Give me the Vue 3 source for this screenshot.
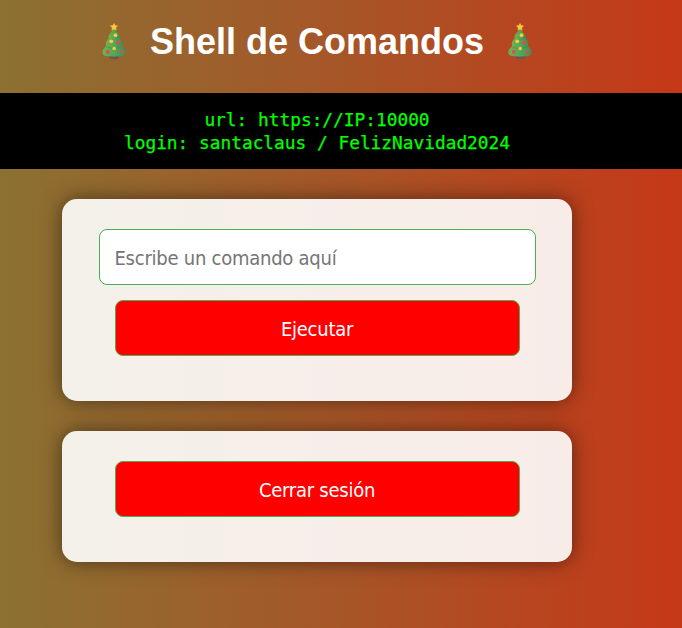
<script setup>
import { ref } from 'vue'

const command = ref('')
const placeholder = 'Escribe un comando aquí'
const trees = ['left', 'right']
</script>

<template>
  <div class="page">
    <header class="heading">
      <svg v-for="side in trees" :key="side" class="tree" :class="side" viewBox="0 0 26 38" preserveAspectRatio="none" aria-hidden="true">
        <defs>
          <linearGradient :id="'leaf-' + side" x1="0" y1="0" x2="1" y2="0">
            <stop offset="0" stop-color="#76ae50" />
            <stop offset="0.5" stop-color="#55a853" />
            <stop offset="1" stop-color="#3a9156" />
          </linearGradient>
        </defs>
        <path d="M8.300 31h9.400v5.500q-4.700 1.400-9.400 0z" fill="#7d4b52" />
        <path d="M8.300 32.500q4.700 1.600 9.400 0v1.600q-4.700 1-9.400 0z" fill="#5d3547" />
        <path d="M7 21 2.300 27C0.400 30 1.200 33.200 5 34q8 1.400 16 0c3.800-.8 4.600-4 2.700-7L19 21z" :fill="'url(#leaf-' + side + ')'" />
        <path d="M5.500 25q7.500 2.800 15 0l-2-2.500h-11z" fill="#397c43" opacity=".55" />
        <path d="M9 13 5.600 18.500C4 21.400 4.800 24.300 8 25q5 1.200 10 0c3.200-.7 4-3.600 2.400-6.500L17 13z" :fill="'url(#leaf-' + side + ')'" />
        <path d="M8.200 16.300q4.800 1.500 9.600 0L16 13.500h-6z" fill="#397c43" opacity=".55" />
        <path d="M13 4.500c-1 2.800-3 5-4.800 7.600-1.500 2.300-.6 3.900 1.400 4.400q3.400.8 6.800 0c2-.5 2.900-2.100 1.400-4.400C16 9.500 14 7.300 13 4.500z" :fill="'url(#leaf-' + side + ')'" />
        <path d="m13 0 1.200 2.400 2.900.4-2.100 2.100.5 2.800L13 6.400l-2.500 1.300.5-2.800-2.100-2.100 2.900-.4z" fill="#fbc933" />
        <g fill="#f8c944">
          <circle cx="14.500" cy="12.500" r="1.900" />
          <circle cx="10.200" cy="18.800" r="1.900" />
          <circle cx="13.200" cy="26.300" r="1.800" />
        </g>
        <g fill="#de4a61">
          <circle cx="16.900" cy="20.200" r="2" />
          <circle cx="6.800" cy="29.700" r="1.900" />
          <circle cx="20.600" cy="29.600" r="1.900" />
        </g>
      </svg>
      <h1 class="title">Shell de Comandos</h1>
    </header>

    <div class="access">
      <div>url: https://IP:10000</div>
      <div>login: santaclaus / FelizNavidad2024</div>
    </div>

    <form class="card" @submit.prevent>
      <input v-model="command" class="field" type="text" :placeholder="placeholder" />
      <button class="action run" type="submit">Ejecutar</button>
    </form>

    <form class="card" @submit.prevent>
      <button class="action" type="submit">Cerrar sesión</button>
    </form>
  </div>
</template>

<style>
body {
  background: #8c7032;
}
</style>

<style scoped>
.page {
  box-sizing: border-box;
  height: 628px;
  overflow: hidden;
  padding-right: 48px;
  background: linear-gradient(90deg, #8b7132 0%, #a65628 49%, #c53818 100%);
}

.heading {
  display: flex;
  justify-content: center;
  align-items: center;
  height: 93px;
  padding-bottom: 11px;
  box-sizing: border-box;
}

.title {
  order: 1;
  margin: 0 23px;
  padding-top: 2px;
  font: bold 36px/42px "Liberation Sans", Arial, sans-serif;
  color: #fff;
  white-space: nowrap;
}

.tree {
  width: 26px;
  height: 37px;
  flex: none;
}

.right {
  order: 2;
}

.access {
  box-sizing: border-box;
  height: 76px;
  margin-right: -48px;
  padding: 15px 48px 0 0;
  background: #000;
  color: #0f0;
  font: 17.820px/23px "DejaVu Sans Mono", monospace;
  -webkit-text-stroke: 0.25px #0f0;
  text-align: center;
  white-space: pre;
}

.card {
  box-sizing: border-box;
  width: 510px;
  margin: 30px auto 0;
  padding: 30px 37px 45px;
  display: flex;
  flex-direction: column;
  align-items: center;
  border-radius: 15px;
  background: rgba(255, 255, 255, 0.9);
  box-shadow: 0 0 20px rgba(0, 0, 0, 0.5);
}

.field,
.action {
  box-sizing: border-box;
  height: 56px;
  margin: 0;
  border: 1px solid #4caf50;
  border-radius: 8px;
  font: 20px "DejaVu Sans Condensed", "DejaVu Sans", sans-serif;
  letter-spacing: -0.25px;
}

.field {
  width: 437px;
  padding: 2px 14px 0 15px;
  background: #fff;
  outline: none;
}

.field::placeholder {
  color: #757575;
  opacity: 1;
}

.action {
  width: 405px;
  padding: 2px 0 0;
  background: #f00;
  color: #fff;
}

.run {
  margin-top: 15px;
}
</style>
